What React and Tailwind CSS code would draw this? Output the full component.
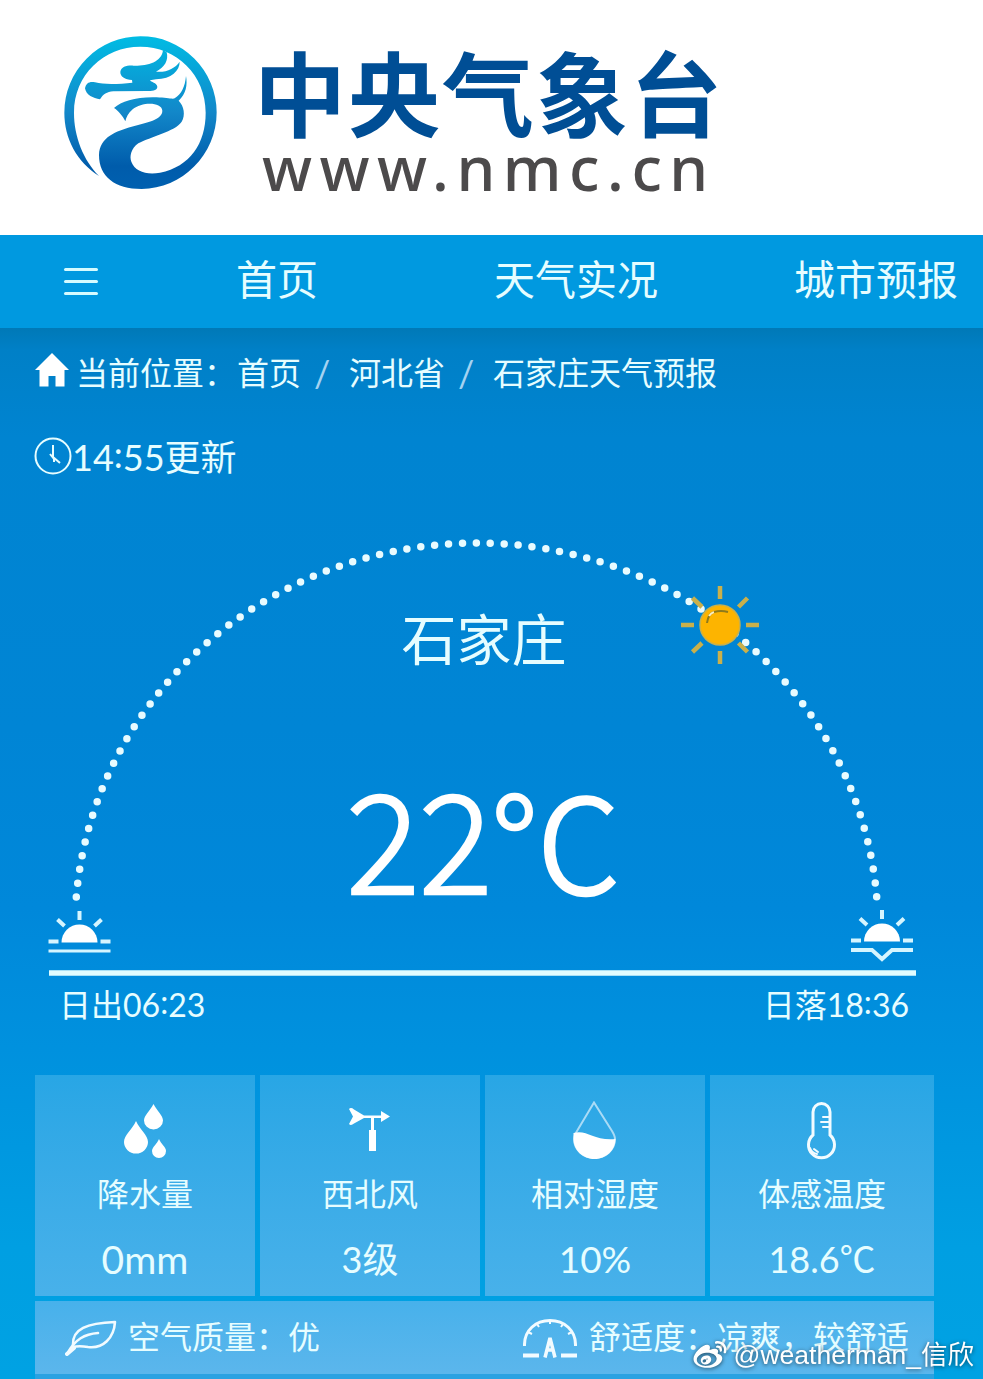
import React from 'react';
import { FaWeibo } from 'react-icons/fa';

const navItems = [
  { label: '首页', className: 'ml-[138px]' },
  { label: '天气实况', className: 'ml-[176px]' },
  { label: '城市预报', className: 'ml-[136px]' },
];

const DragonLogo = () => (
  <svg className="w-[190px] h-[190px] shrink-0" viewBox="0 0 570 570">
    <defs>
      <linearGradient id="dragon" gradientUnits="userSpaceOnUse" x1="0" y1="48" x2="0" y2="507">
        <stop offset="0" stopColor="#00bce4" />
        <stop offset="0.5" stopColor="#1287c9" />
        <stop offset="0.85" stopColor="#005cab" />
        <stop offset="1" stopColor="#0060b0" />
      </linearGradient>
    </defs>
    <g fill="url(#dragon)">
      <path d="M147 468C80 425 43 355 43 278A228.500 229 0 0 1 500 277C500 405 395 507 275 507C195 507 147 470 147 405C149 350 200 333 245 320C290 307 337 300 337 272C335 245 275 245 248 268C234 280 229 292 226 304C218 288 205 272 192 264C215 243 260 230 320 232C350 233 368 238 374 235C395 222 405 200 408 168C413 195 408 222 386 242C402 258 407 285 395 305C375 335 300 350 265 370C243 385 238 410 244 425C255 455 290 465 330 458C420 440 467 370 467 278C467 165 380 80 271 80C160 80 72 165 72 278C72 350 100 420 147 468Z" />
      <path d="M105 205C108 188 120 183 135 187C165 195 210 192 247 188L246 180C225 178 210 170 211 155C214 140 230 136 250 137C290 138 335 128 339 90L350 97C356 120 345 142 318 155C350 158 375 145 389 125C389 152 365 176 318 178L300 181C303 187 320 188 322 200C322 210 310 214 290 213L190 214C170 216 160 222 150 238C130 235 108 225 105 205Z" />
    </g>
  </svg>
);

const Drops = () => (
  <svg className="w-[60px] h-[60px]" viewBox="0 0 60 60" fill="#fff">
    <path d="M38.500 3C42 10 48 14.500 48 19.500A9.500 9 0 0 1 29 19.500C29 14.500 35 10 38.500 3Z" />
    <path d="M21 20C24.500 28 33 34.500 33 41A12 11.500 0 0 1 9 41C9 34.500 17.500 28 21 20Z" />
    <path d="M44 38C46 43 51 46 51 50A7 7 0 0 1 37 50C37 46 42 43 44 38Z" />
  </svg>
);

const Vane = () => (
  <svg className="w-[60px] h-[60px]" viewBox="0 0 60 60" fill="#fff">
    <path d="M9 8Q11 6 14 8.500L24 14.500H41V10L50 15.500L41 21V17H24L14 22.500Q11 25 9 23L13 15.500Z" />
    <path d="M31 16h3v14h-3zM29 29h7v21h-7z" />
  </svg>
);

const Humidity = () => (
  <svg className="w-[60px] h-[60px]" viewBox="0 0 60 60">
    <path d="M29 1.500L12 30Q9 35 9 38A20.500 19 0 0 0 50 38Q50 35 47 30Z" fill="none" stroke="#a9dbf6" strokeWidth="2" />
    <path d="M8.500 32C22 28 28 40 50.500 38C50.500 49 41 58 29.500 58S8.500 49 8.500 38Z" fill="#fff" />
  </svg>
);

const Thermometer = () => (
  <svg className="w-[60px] h-[60px]" viewBox="0 0 60 60" fill="none" stroke="#f2fbff" strokeWidth="3" strokeLinecap="round">
    <path d="M21 34V11A8.500 8.500 0 0 1 38 11V34A13 13 0 1 1 21 34Z" />
    <path d="M31 16h6M29 21h8M31 26h6" strokeWidth="2" />
    <path d="M18 47Q20 52 25 53M22 48L26 51" strokeWidth="2" />
  </svg>
);

const Leaf = () => (
  <svg className="w-[52px] h-[36px]" viewBox="0 0 52 36" fill="none" stroke="#f2fbff" strokeWidth="2.600" strokeLinecap="round" strokeLinejoin="round">
    <path d="M8 25C7 9 22 3 50 2C49 18 38 29 23 27C17 26 12 26 8 27" />
    <path d="M2 34C10 19 20 14 33 13" />
    <path d="M2 34L9 28" strokeWidth="4" />
  </svg>
);

const Gauge = () => (
  <svg className="w-[54px] h-[40px]" viewBox="0 0 54 40" fill="none" stroke="#f2fbff" strokeWidth="3">
    <path d="M1.500 28C1 12 13 2.500 27 2.500S53 12 52.500 28" />
    <path d="M27 2V6M14 6L16 9M40 6L38 9M5 14L9 16M49 14L45 16" strokeWidth="2" />
    <path d="M0 37.500H16M38 37.500H54" strokeWidth="4" />
    <path d="M22 39.500L27 20L32 39.500M24 32H30" strokeWidth="3.500" />
  </svg>
);

const cards = [
  { icon: Drops, label: '降水量', value: '0mm', valueClass: 'text-[39px]' },
  { icon: Vane, label: '西北风', value: '3级', valueClass: 'text-[36px]' },
  { icon: Humidity, label: '相对湿度', value: '10%', valueClass: 'text-[37px]' },
  { icon: Thermometer, label: '体感温度', value: '18.6℃', valueClass: 'text-[36px]' },
];

const Time = ({ value }) => {
  const [hour, minute] = value.split(':');
  return (
    <>
      {hour}
      <span className="relative -top-[3px]">:</span>
      {minute}
    </>
  );
};

const Horizon = ({ x, y, down }) => (
  <g transform={`translate(${x} ${y})`} stroke="#d5f5ff" strokeWidth="4" fill="none">
    <path d="M-18 0.500A18 18 0 0 1 18 0.500Z" fill="#fff" stroke="none" />
    <path d="M0 -31V-22M-22 -22.500L-15 -16M22 -22.500L15 -16M-31 -0.500H-21M31 -0.500H21" />
    {down ? (
      <path d="M-31 9H-10L0 18L10 9H31" />
    ) : (
      <path d="M-31 9H31" strokeWidth="3" />
    )}
  </g>
);

const SunPath = () => (
  <svg className="w-full h-[480px] block" viewBox="0 500 983 480">
    <path
      d="M76.300 897A402 385 0 0 1 476.500 543A402 385 0 0 1 876.700 897"
      pathLength="84.02"
      fill="none"
      stroke="#e8fbff"
      strokeWidth="7.500"
      strokeLinecap="round"
      strokeDasharray="0 1"
    />
    <g stroke="#c9b04b" strokeWidth="4.500">
      <path d="M720 586V599M720 651V664M681 625H694M746 625H759M692.500 598L702 607M747.500 598L738.500 607M692.500 652L702 643M747.500 652L738.500 643" />
    </g>
    <circle cx="720" cy="625" r="20" fill="#fdb400" stroke="#c9b04b" strokeWidth="1.500" />
    <path d="M707 623Q708 614 714 612" fill="none" stroke="#8d7a1c" strokeWidth="2" />
    <path d="M709 616Q711 613 714 612" fill="none" stroke="#fff0c0" strokeWidth="2" />
    <path d="M714 612Q721 610 728 612" fill="none" stroke="#8d7a1c" strokeWidth="2" />
    <Horizon x={79.500} y={942} />
    <Horizon x={882} y={941} down />
    <path d="M49 973H916" stroke="#e0fcff" strokeWidth="5.500" />
  </svg>
);

const App = () => {
  return (
    <div className="w-[983px] h-[1379px] overflow-hidden relative flex flex-col bg-white text-[#e6fdff] font-['Lato','Noto_Sans_CJK_SC',sans-serif]">
      <header className="h-[235px] shrink-0 flex items-start pl-[50px] pt-5 bg-white">
        <DragonLogo />
        <div className="pl-[14px] pt-[25px]">
          <h1 className="text-[92px] leading-[90px] tracking-[2px] font-bold text-[#004e95] whitespace-nowrap font-['Noto_Sans_CJK_SC',sans-serif]">中央气象台</h1>
          <p className="ml-[8px] text-[62px] leading-[64px] tracking-[7.5px] font-medium text-[#4c4a4b] font-['Noto_Sans',sans-serif]">www.nmc.cn</p>
        </div>
      </header>

      <nav className="h-[93px] shrink-0 flex items-center bg-[#0099e0] pl-16">
        <div className="w-[34px] h-[27px] flex flex-col justify-between">
          <span className="h-[3px] rounded bg-[#d5fbff]" />
          <span className="h-[3px] rounded bg-[#d5fbff]" />
          <span className="h-[3px] rounded bg-[#d5fbff]" />
        </div>
        {navItems.map((item) => (
          <a key={item.label} className={`${item.className} -mt-1 shrink-0 text-[41px] leading-[60px] whitespace-nowrap`}>{item.label}</a>
        ))}
      </nav>

      <main className="h-[1051px] shrink-0 flex flex-col bg-[linear-gradient(180deg,#0079b7_0px,#0080c7_22px,#0084d1_110px,#0085d5_400px,#0088da_580px,#0091de_720px,#009fe2_920px,#00a2e3_1051px)]">
        <div className="h-[90px] shrink-0 flex items-center pl-[35px] text-[32px] leading-[48px] whitespace-nowrap">
          <svg className="w-[34px] h-[34px] -mt-1.5" viewBox="0 0 34 34" fill="#fff">
            <path d="M17 0L34 17H29.500V33.500H20.500V23H13.500V33.500H4.500V17H0Z" />
          </svg>
          <span className="ml-[7px]">当前位置：</span>
          <span className="ml-[1px]">首页</span>
          <span className="ml-[13px] w-[35px] text-[36px] text-[#a5d3f1]">/</span>
          <span>河北省</span>
          <span className="ml-[13px] w-[35px] text-[36px] text-[#a5d3f1]">/</span>
          <span>石家庄天气预报</span>
        </div>
        <div className="h-[82px] shrink-0 flex items-center pl-[34px] text-[36px] leading-[52px]">
          <svg className="w-[38px] h-[38px] -mt-1.5" viewBox="0 0 38 38" fill="none" stroke="#e6fdff" strokeWidth="2">
            <circle cx="19" cy="19" r="17.500" />
            <path d="M19 8V20L26 26M16 17L20 22V25" />
          </svg>
          <span className="-mt-1">
            <Time value="14:55" />更新
          </span>
        </div>

        <section className="relative h-[480px] shrink-0">
          <SunPath />
          <div className="absolute left-0 w-[968px] top-[99px] flex flex-col items-center">
            <h2 className="text-[55px] leading-[80px]">石家庄</h2>
            <div className="mt-[70px] flex items-baseline text-[137px] leading-[170px] font-light text-white [-webkit-text-stroke:2.5px_white] font-['Noto_Sans_CJK_SC',sans-serif]">
              <span className="tracking-[-0.5px]">22</span>
              <span className="-ml-[2px] text-[132px]">℃</span>
            </div>
          </div>
        </section>
        <div className="h-[50px] shrink-0 flex justify-between pl-[59px] pr-[74px] text-[32px] leading-[50px]">
          <span>日出<Time value="06:23" /></span>
          <span>日落<Time value="18:36" /></span>
        </div>

        <div className="mt-[45px] mx-[35px] w-[899px] grid grid-cols-[220px_220px_220px_224px] gap-[5px]">
          {cards.map(({ icon: Icon, label, value, valueClass }) => (
            <div key={label} className="h-[221px] flex flex-col items-center pt-[26px] bg-gradient-to-b from-[#28a6e5] to-[#48b1ea]">
              <Icon />
              <p className="mt-[9px] text-[32px] leading-[48px]">{label}</p>
              <p className={`mt-[16px] leading-[50px] ${valueClass}`}>{value}</p>
            </div>
          ))}
          <div className="col-span-4 h-[73px] flex items-center pl-[30px] bg-gradient-to-b from-[#47b1eb] to-[#5bb6ec] text-[32px] leading-[48px] whitespace-nowrap">
            <Leaf />
            <span className="-mt-0.5 ml-[11px] w-[395px]">空气质量：优</span>
            <Gauge />
            <span className="-mt-0.5 ml-[12px]">舒适度：凉爽，较舒适</span>
          </div>
        </div>
        <div className="mx-[35px] w-[899px] h-[5px] bg-[#2aa2e2]" />
      </main>

      <div className="absolute right-[9px] bottom-[4px] flex items-center text-[26.500px] leading-[40px] text-white font-['Liberation_Sans','Noto_Sans_CJK_SC',sans-serif] drop-shadow-[0_1px_2px_rgba(0,0,0,0.6)]">
        <FaWeibo className="w-[36px] h-[33px] mr-[6px]" />
        @weatherman_信欣
      </div>
    </div>
  );
};

export default App;
